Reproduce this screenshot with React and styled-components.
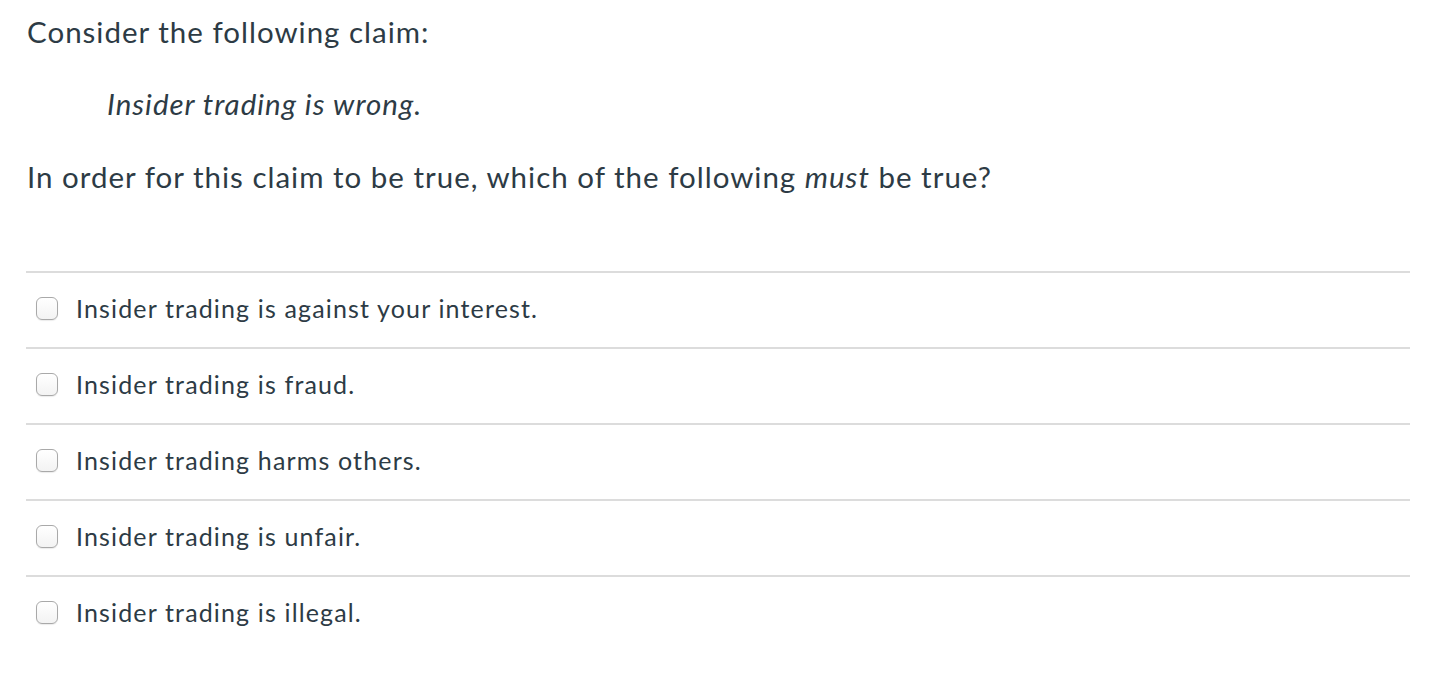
import React from "react";
import styled, { createGlobalStyle } from "styled-components";

const Global = createGlobalStyle`
  html, body {
    margin: 0;
    padding: 0;
    background: #fff;
  }
  body {
    font-family: Lato, "Liberation Sans", sans-serif;
    color: #2d3b45;
  }
`;

const Page = styled.div`
  padding: 10px 28px 0 26px;
`;

const Question = styled.div`
  font-size: 29.5px;
  line-height: 1.5;
  letter-spacing: 1px;
  padding-left: 1px;

  p {
    margin: 0 0 28px;
  }
`;

const Claim = styled.p`
  && {
    margin-left: 80px;
    font-style: italic;
  }
`;

const Answers = styled.ul`
  list-style: none;
  margin: 72px 0 0;
  padding: 0;
  border-top: 2px solid #dcdcdc;
`;

const Answer = styled.li`
  display: flex;
  align-items: center;
  gap: 18px;
  height: 70px;
  padding: 0 0 4px 10px;
  border-bottom: 2px solid #dcdcdc;
  font-size: 25px;
  letter-spacing: 1.15px;

  &:last-child {
    border-bottom: none;
  }
`;

const Box = styled.span`
  flex: none;
  width: 20px;
  height: 21px;
  border: 1px solid #a9a9a9;
  border-radius: 6px;
  background: linear-gradient(#fff, #f3f3f3);
  box-shadow: 0 1px 1px rgba(0, 0, 0, 0.08);
  margin-top: 2px;
`;

const options = [
  "Insider trading is against your interest.",
  "Insider trading is fraud.",
  "Insider trading harms others.",
  "Insider trading is unfair.",
  "Insider trading is illegal.",
];

export default function App() {
  return (
    <>
      <Global />
      <Page>
        <Question>
          <p>Consider the following claim:</p>
          <Claim>Insider trading is wrong.</Claim>
          <p>
            In order for this claim to be true, which of the following <em>must</em> be true?
          </p>
        </Question>
        <Answers>
          {options.map((o) => (
            <Answer key={o}>
              <Box />
              <span>{o}</span>
            </Answer>
          ))}
        </Answers>
      </Page>
    </>
  );
}
